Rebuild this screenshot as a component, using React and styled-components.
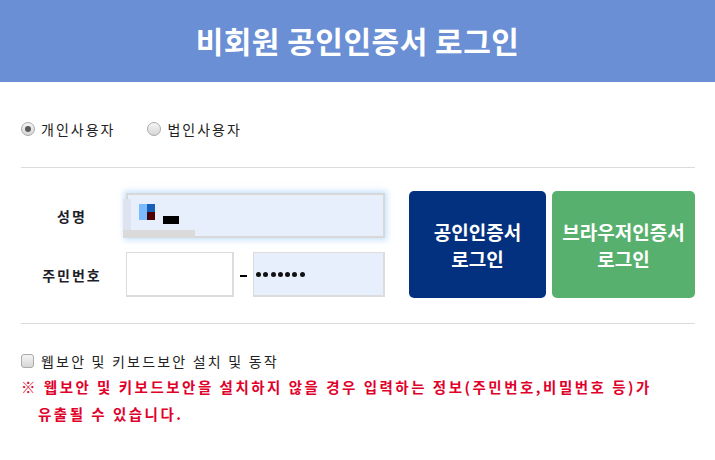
import React from 'react';
import styled, { createGlobalStyle } from 'styled-components';

const GlobalStyle = createGlobalStyle`
  html, body {
    margin: 0;
    padding: 0;
    background: #fff;
  }
  body {
    font-family: "Noto Sans CJK KR", "Noto Sans", sans-serif;
    color: #222;
  }
`;

const App = () => {
  return (
    <Page>
      <GlobalStyle />
      <Header>
        <Title>비회원 공인인증서 로그인</Title>
      </Header>
      <Content>
        <RadioRow>
          <RadioLabel>
            <Radio $checked />
            개인사용자
          </RadioLabel>
          <RadioLabel>
            <Radio />
            법인사용자
          </RadioLabel>
        </RadioRow>
        <Divider />
        <FormSection>
          <Fields>
            <FieldLabel>성명</FieldLabel>
            <NameInput>
              <Strip />
              <GrayBar />
              <Tile>
                <TileCell $color="#7abaff" $tall />
                <TileStack>
                  <TileCell $color="#1760b6" />
                  <TileCell $color="#4d0000" />
                </TileStack>
              </Tile>
              <BlackBar />
            </NameInput>
            <FieldLabel>주민번호</FieldLabel>
            <IdRow>
              <Input />
              <Dash />
              <Input $filled>
                {Array.from({ length: 7 }).map((_, i) => (
                  <Dot key={i} />
                ))}
              </Input>
            </IdRow>
          </Fields>
          <LoginButton $color="#03317f" $width={137}>
            공인인증서
            <br />
            로그인
          </LoginButton>
          <LoginButton $color="#58b06e" $width={143}>
            브라우저인증서
            <br />
            로그인
          </LoginButton>
        </FormSection>
        <Divider />
        <CheckRow>
          <Checkbox />
          웹보안 및 키보드보안 설치 및 동작
        </CheckRow>
        <Warning>
          <span>※ 웹보안 및 키보드보안을 설치하지 않을 경우 입력하는 정보(주민번호,비밀번호 등)가</span>
          <Indent>유출될 수 있습니다.</Indent>
        </Warning>
      </Content>
    </Page>
  );
};

// Styled Components

const Page = styled.div`
  width: 715px;
  height: 460px;
  background: #fff;
`;

const Header = styled.div`
  height: 82px;
  background-color: #6a8fd5;
  display: flex;
  align-items: center;
  justify-content: center;
`;

const Title = styled.h1`
  margin: 0;
  font-size: 30px;
  font-weight: 700;
  color: #fff;
  letter-spacing: 0.5px;
  padding-bottom: 2px;
`;

const Content = styled.div`
  padding: 0 20px 0 21px;
`;

const RadioRow = styled.div`
  display: flex;
  align-items: center;
  gap: 32px;
  height: 85px;
  padding-top: 8px;
  box-sizing: border-box;
`;

const RadioLabel = styled.label`
  display: flex;
  align-items: center;
  gap: 6px;
  font-size: 14px;
  letter-spacing: 2px;
  color: #222;
`;

const Radio = styled.span`
  position: relative;
  width: 14px;
  height: 14px;
  border-radius: 50%;
  border: 1px solid #a9a9a9;
  background: linear-gradient(#f6f6f6, #d6d6d6);
  box-sizing: border-box;

  &::after {
    content: '';
    display: ${(p) => (p.$checked ? 'block' : 'none')};
    position: absolute;
    top: 3px;
    left: 3px;
    width: 6px;
    height: 6px;
    border-radius: 50%;
    background: #5a5a5a;
  }
`;

const Divider = styled.div`
  height: 1px;
  background: #dcdcdc;
`;

const FormSection = styled.div`
  display: flex;
  align-items: flex-start;
  gap: 6px;
  height: 155px;
  padding-top: 23px;
  box-sizing: border-box;
`;

const Fields = styled.div`
  display: grid;
  grid-template-columns: 105px 259px;
  grid-auto-rows: 45px;
  row-gap: 14px;
  align-items: center;
  margin-top: 2px;
  margin-right: 18px;
  flex-shrink: 0;
`;

const FieldLabel = styled.div`
  text-align: center;
  font-size: 14px;
  font-weight: 700;
  letter-spacing: 2px;
  color: #1e1e2a;
  padding-right: 3px;
`;

const NameInput = styled.div`
  position: relative;
  height: 45px;
  border: 2px solid #d8d8d8;
  background: #e8effc;
  box-sizing: border-box;
  box-shadow: 0 0 6px 2px rgba(150, 200, 250, 0.55);
  display: flex;
  align-items: center;
  padding-left: 11px;
  gap: 8px;
`;

const Strip = styled.span`
  position: absolute;
  left: -5px;
  top: 4px;
  bottom: -2px;
  width: 8px;
  background: #dde4f0;
`;

const GrayBar = styled.span`
  position: absolute;
  left: -5px;
  bottom: -2px;
  width: 72px;
  height: 8px;
  background: #dadada;
`;

const Tile = styled.span`
  display: flex;
  margin-top: -8px;
`;

const TileStack = styled.span`
  display: flex;
  flex-direction: column;
`;

const TileCell = styled.span`
  width: 8px;
  height: ${(p) => (p.$tall ? '16px' : '8px')};
  background: ${(p) => p.$color};
`;

const BlackBar = styled.span`
  width: 16px;
  height: 8px;
  background: #000;
  margin-top: 8px;
`;

const IdRow = styled.div`
  display: flex;
  align-items: center;
  height: 45px;
`;

const Input = styled.div`
  height: 45px;
  width: ${(p) => (p.$filled ? '132px' : '108px')};
  border: 1px solid #dcdcdc;
  border-width: 1px 2px 2px 1px;
  background: ${(p) => (p.$filled ? '#e8effc' : '#fff')};
  box-sizing: border-box;
  display: flex;
  align-items: center;
  gap: 2.3px;
  padding-left: 2px;
`;

const Dash = styled.span`
  width: 7px;
  height: 2px;
  margin: 2px 6px 0;
  background: #000;
`;

const Dot = styled.span`
  width: 5px;
  height: 5px;
  border-radius: 50%;
  background: #111;
`;

const LoginButton = styled.button`
  flex-shrink: 0;
  width: ${(p) => p.$width}px;
  height: 107px;
  border: none;
  border-radius: 5px;
  background-color: ${(p) => p.$color};
  color: #fff;
  font-family: "Noto Sans CJK KR", sans-serif;
  font-size: 19px;
  font-weight: 700;
  line-height: 27px;
  padding: 0;
  cursor: pointer;
`;

const CheckRow = styled.label`
  display: flex;
  align-items: center;
  gap: 7px;
  margin-top: 27px;
  font-size: 14px;
  letter-spacing: 2.2px;
  color: #222;
`;

const Checkbox = styled.span`
  width: 13px;
  height: 14px;
  border: 1px solid #aaa;
  border-radius: 3px;
  background: linear-gradient(#f4f4f4, #d6d6d6);
  box-sizing: border-box;
`;

const Warning = styled.div`
  display: flex;
  flex-direction: column;
  margin-top: 2px;
  font-size: 14.5px;
  font-weight: 700;
  line-height: 27px;
  letter-spacing: 2.5px;
  color: #e0002a;
`;

const Indent = styled.span`
  padding-left: 17px;
`;

export default App;
